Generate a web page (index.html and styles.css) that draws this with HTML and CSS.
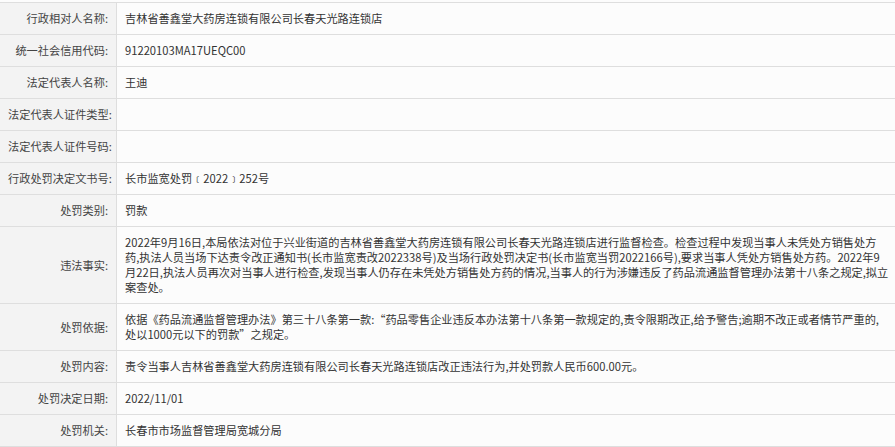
FILE: index.html
```html
<!DOCTYPE html>
<html lang="zh-CN">
<head>
<meta charset="utf-8">
<title>行政处罚信息</title>
<link rel="stylesheet" href="styles.css">
</head>
<body>
<table class="info">
  <tr><th>行政相对人名称:</th><td>吉林省善鑫堂大药房连锁有限公司长春天光路连锁店</td></tr>
  <tr><th>统一社会信用代码:</th><td>91220103MA17UEQC00</td></tr>
  <tr><th>法定代表人名称:</th><td>王迪</td></tr>
  <tr><th>法定代表人证件类型:</th><td></td></tr>
  <tr><th>法定代表人证件号码:</th><td></td></tr>
  <tr><th>行政处罚决定文书号:</th><td>长市监宽处罚﹝2022﹞252号</td></tr>
  <tr><th>处罚类别:</th><td>罚款</td></tr>
  <tr><th>违法事实:</th><td>2022年9月16日,本局依法对位于兴业街道的吉林省善鑫堂大药房连锁有限公司长春天光路连锁店进行监督检查。检查过程中发现当事人未凭处方销售处方药,执法人员当场下达责令改正通知书(长市监宽责改2022338号)及当场行政处罚决定书(长市监宽当罚2022166号),要求当事人凭处方销售处方药。2022年9月22日,执法人员再次对当事人进行检查,发现当事人仍存在未凭处方销售处方药的情况,当事人的行为涉嫌违反了药品流通监督管理办法第十八条之规定,拟立案查处。</td></tr>
  <tr><th>处罚依据:</th><td>依据《药品流通监督管理办法》第三十八条第一款:“药品零售企业违反本办法第十八条第一款规定的,责令限期改正,给予警告;逾期不改正或者情节严重的,处以1000元以下的罚款”之规定。</td></tr>
  <tr><th>处罚内容:</th><td>责令当事人吉林省善鑫堂大药房连锁有限公司长春天光路连锁店改正违法行为,并处罚款人民币600.00元。</td></tr>
  <tr><th>处罚决定日期:</th><td>2022/11/01</td></tr>
  <tr><th>处罚机关:</th><td>长春市市场监督管理局宽城分局</td></tr>
</table>
</body>
</html>
```

FILE: styles.css
```css
html, body {
  margin: 0;
  padding: 0;
  background: #fcfcfc;
}
body {
  padding-top: 2px;
  font-family: "Noto Sans CJK SC", "Microsoft YaHei", sans-serif;
  font-size: 11.2px;
  color: #333;
}
.info {
  width: 100%;
  border-collapse: collapse;
  table-layout: fixed;
}
.info th,
.info td {
  border-top: 1px solid #dedede;
  border-bottom: 1px solid #dedede;
  padding: 8px;
  line-height: 15px;
  vertical-align: middle;
}
.info th {
  width: 100px;
  background: #f3f3f3;
  text-align: right;
  font-weight: normal;
  color: #444;
  border-right: 1px solid #dedede;
  white-space: nowrap;
}
.info td {
  background: #fcfcfc;
  padding-left: 8px;
  padding-right: 5px;
}
```
